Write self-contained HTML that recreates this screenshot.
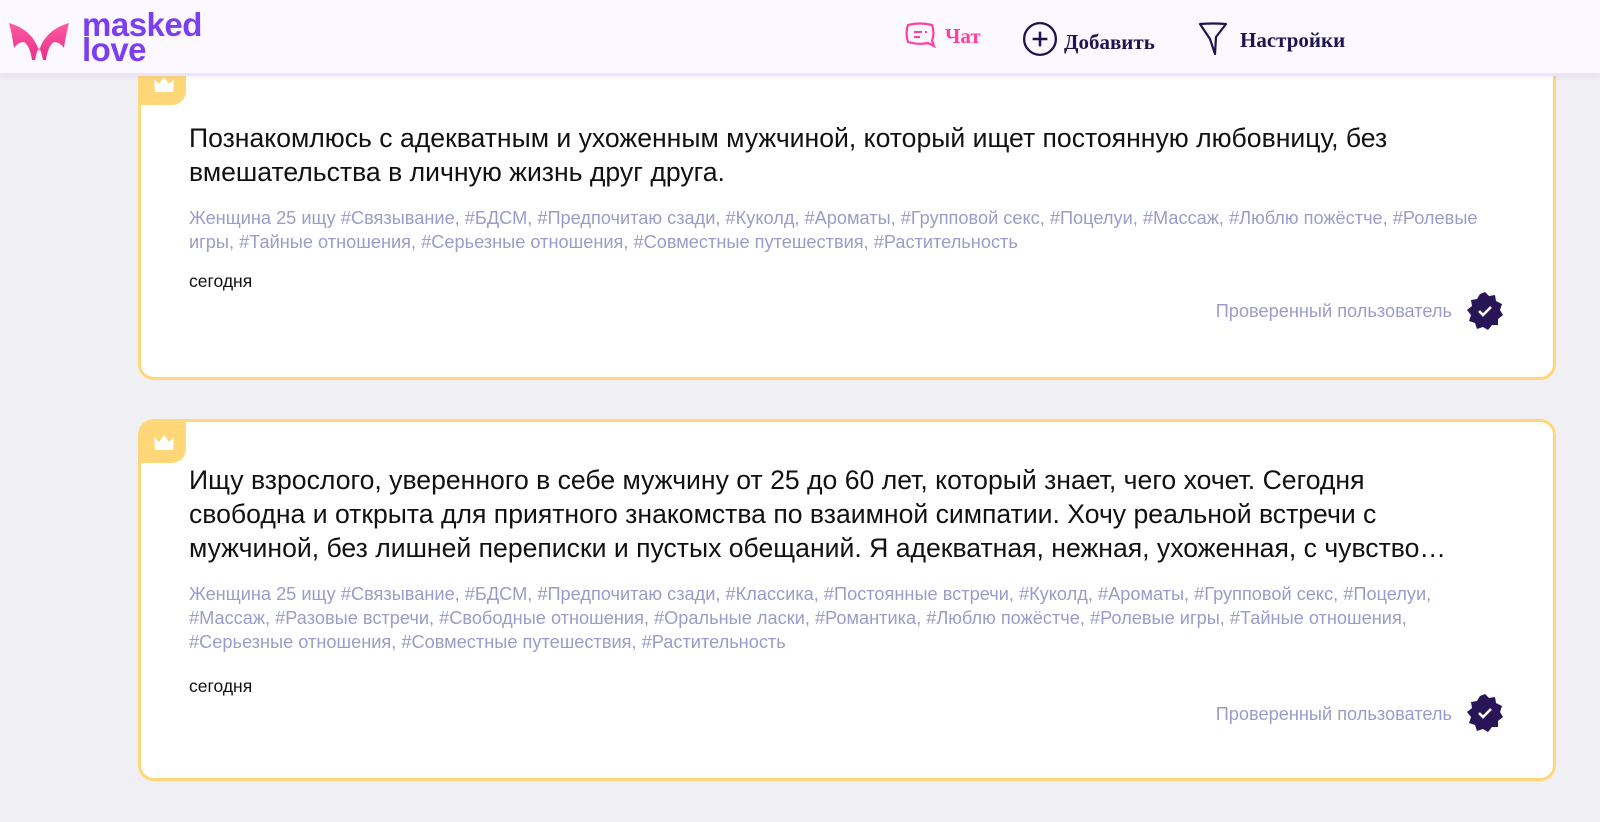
<!DOCTYPE html>
<html><head><meta charset="utf-8"><style>
*{margin:0;padding:0;box-sizing:border-box}
body{width:1600px;height:822px;overflow:hidden;background:#f0f0f4;font-family:"Liberation Sans",Arial,sans-serif;position:relative}
.hdr{position:absolute;left:0;top:0;width:1600px;height:76px;background:#fbf9ff;border-bottom:3px solid #ece4fb;z-index:5;box-shadow:0 2px 4px rgba(120,90,200,.08)}
.logo{position:absolute;left:82px;top:12px;color:#7b3ff0;font-weight:bold;font-size:33px;line-height:25px;letter-spacing:-0.5px}
.nav{position:absolute;top:21px;font-family:"Liberation Serif",serif;font-weight:bold;font-size:21px;color:#1e1450}
.card{position:absolute;left:138px;width:1418px;background:#fff;border:3px solid #ffd778;border-radius:16px;overflow:hidden}
.badge{position:absolute;left:0;top:0;width:45px;height:41px;background:#ffd778;border-bottom-right-radius:14px}
.t{position:absolute;left:48px;font-size:26.6px;line-height:34px;color:#111;white-space:nowrap}
.tags{position:absolute;left:48px;font-size:18.2px;line-height:24px;color:#9b9cc9;white-space:nowrap}
.date{position:absolute;left:48px;font-size:17.5px;color:#111}
.ver{position:absolute;right:101px;font-size:18.2px;color:#9b9cc9}
.vb{position:absolute;left:1324px}
</style></head><body>
<div class="hdr">
<svg style="position:absolute;left:8px;top:20px" width="62" height="42" viewBox="0 0 62 42"><defs><linearGradient id="g" x1="0" y1="0" x2="0" y2="1"><stop offset="0" stop-color="#ff5aa0"/><stop offset="1" stop-color="#e8308c"/></linearGradient></defs><path d="M1 3 Q18 8 26 20 Q30 26 31 32 Q32 26 36 20 Q44 8 61 3 Q58 14 56 28 Q52 22 46 22 Q40 26 38 40 L35 40 Q33 30 31 28 Q29 30 27 40 L24 40 Q22 26 16 22 Q10 22 6 28 Q4 14 1 3Z" fill="url(#g)"/></svg>
<div class="logo">masked<br>love</div>
<div class="nav" style="left:903px;color:#ff3ea5"><svg style="vertical-align:-6px;margin-right:8px" width="34" height="28" viewBox="0 0 34 28"><path d="M5 4 Q17 1 29 4 Q32 12 29 20 L31 25 L25 22 Q15 24 5 21 Q2 12 5 4Z" fill="none" stroke="#ff3ea5" stroke-width="2.2"/><path d="M11 11h8M11 16h6M22 11h2" stroke="#ff3ea5" stroke-width="2"/></svg>Чат</div>
<div class="nav" style="left:1022px"><svg style="vertical-align:-8px;margin-right:6px" width="36" height="36" viewBox="0 0 34 34"><circle cx="17" cy="17" r="15" fill="none" stroke="#1e1450" stroke-width="2.2"/><path d="M17 10v14M10 17h14" stroke="#1e1450" stroke-width="2.4"/></svg>Добавить</div>
<div class="nav" style="left:1198px"><svg style="vertical-align:-10px;margin-right:12px" width="30" height="36" viewBox="0 0 30 36"><path d="M2 3 Q15 2 28 3 L18 16 L17 33 L12 18 Z" fill="none" stroke="#1e1450" stroke-width="2.2" stroke-linejoin="round"/></svg>Настройки</div>
</div>

<div class="card" style="top:61px;height:319px">
<div class="badge"><svg style="position:absolute;left:12px;top:12px" width="22" height="17" viewBox="0 0 22 17"><path d="M1 3 L6 8 L11 1 L16 8 L21 3 L20 16 L2 16Z" fill="#fff"/></svg></div>
<div class="t" style="top:57px">Познакомлюсь с адекватным и ухоженным мужчиной, который ищет постоянную любовницу, без<br>вмешательства в личную жизнь друг друга.</div>
<div class="tags" style="top:142px">Женщина 25 ищу #Связывание, #БДСМ, #Предпочитаю сзади, #Куколд, #Ароматы, #Групповой секс, #Поцелуи, #Массаж, #Люблю пожёстче, #Ролевые<br>игры, #Тайные отношения, #Серьезные отношения, #Совместные путешествия, #Растительность</div>
<div class="date" style="top:207px">сегодня</div>
<div class="ver" style="top:237px">Проверенный пользователь</div>
<svg class="vb" style="top:227px" width="40" height="40" viewBox="0 0 40 40"><path d="M20 1 L24 5 L30 4 L31 10 L37 13 L35 19 L38 24 L33 28 L33 34 L27 34 L23 39 L18 36 L12 38 L10 32 L4 30 L6 24 L2 19 L7 15 L6 9 L12 8 L15 3Z" fill="#2a1458"/><path d="M14 20 L18 24 L26 16" fill="none" stroke="#fff" stroke-width="2.6"/></svg>
</div>

<div class="card" style="top:419px;height:362px">
<div class="badge"><svg style="position:absolute;left:12px;top:12px" width="22" height="17" viewBox="0 0 22 17"><path d="M1 3 L6 8 L11 1 L16 8 L21 3 L20 16 L2 16Z" fill="#fff"/></svg></div>
<div class="t" style="top:41px">Ищу взрослого, уверенного в себе мужчину от 25 до 60 лет, который знает, чего хочет. Сегодня<br>свободна и открыта для приятного знакомства по взаимной симпатии. Хочу реальной встречи с<br>мужчиной, без лишней переписки и пустых обещаний. Я адекватная, нежная, ухоженная, с чувство…</div>
<div class="tags" style="top:160px">Женщина 25 ищу #Связывание, #БДСМ, #Предпочитаю сзади, #Классика, #Постоянные встречи, #Куколд, #Ароматы, #Групповой секс, #Поцелуи,<br>#Массаж, #Разовые встречи, #Свободные отношения, #Оральные ласки, #Романтика, #Люблю пожёстче, #Ролевые игры, #Тайные отношения,<br>#Серьезные отношения, #Совместные путешествия, #Растительность</div>
<div class="date" style="top:254px">сегодня</div>
<div class="ver" style="top:282px">Проверенный пользователь</div>
<svg class="vb" style="top:271px" width="40" height="40" viewBox="0 0 40 40"><path d="M20 1 L24 5 L30 4 L31 10 L37 13 L35 19 L38 24 L33 28 L33 34 L27 34 L23 39 L18 36 L12 38 L10 32 L4 30 L6 24 L2 19 L7 15 L6 9 L12 8 L15 3Z" fill="#2a1458"/><path d="M14 20 L18 24 L26 16" fill="none" stroke="#fff" stroke-width="2.6"/></svg>
</div>
</body></html>
